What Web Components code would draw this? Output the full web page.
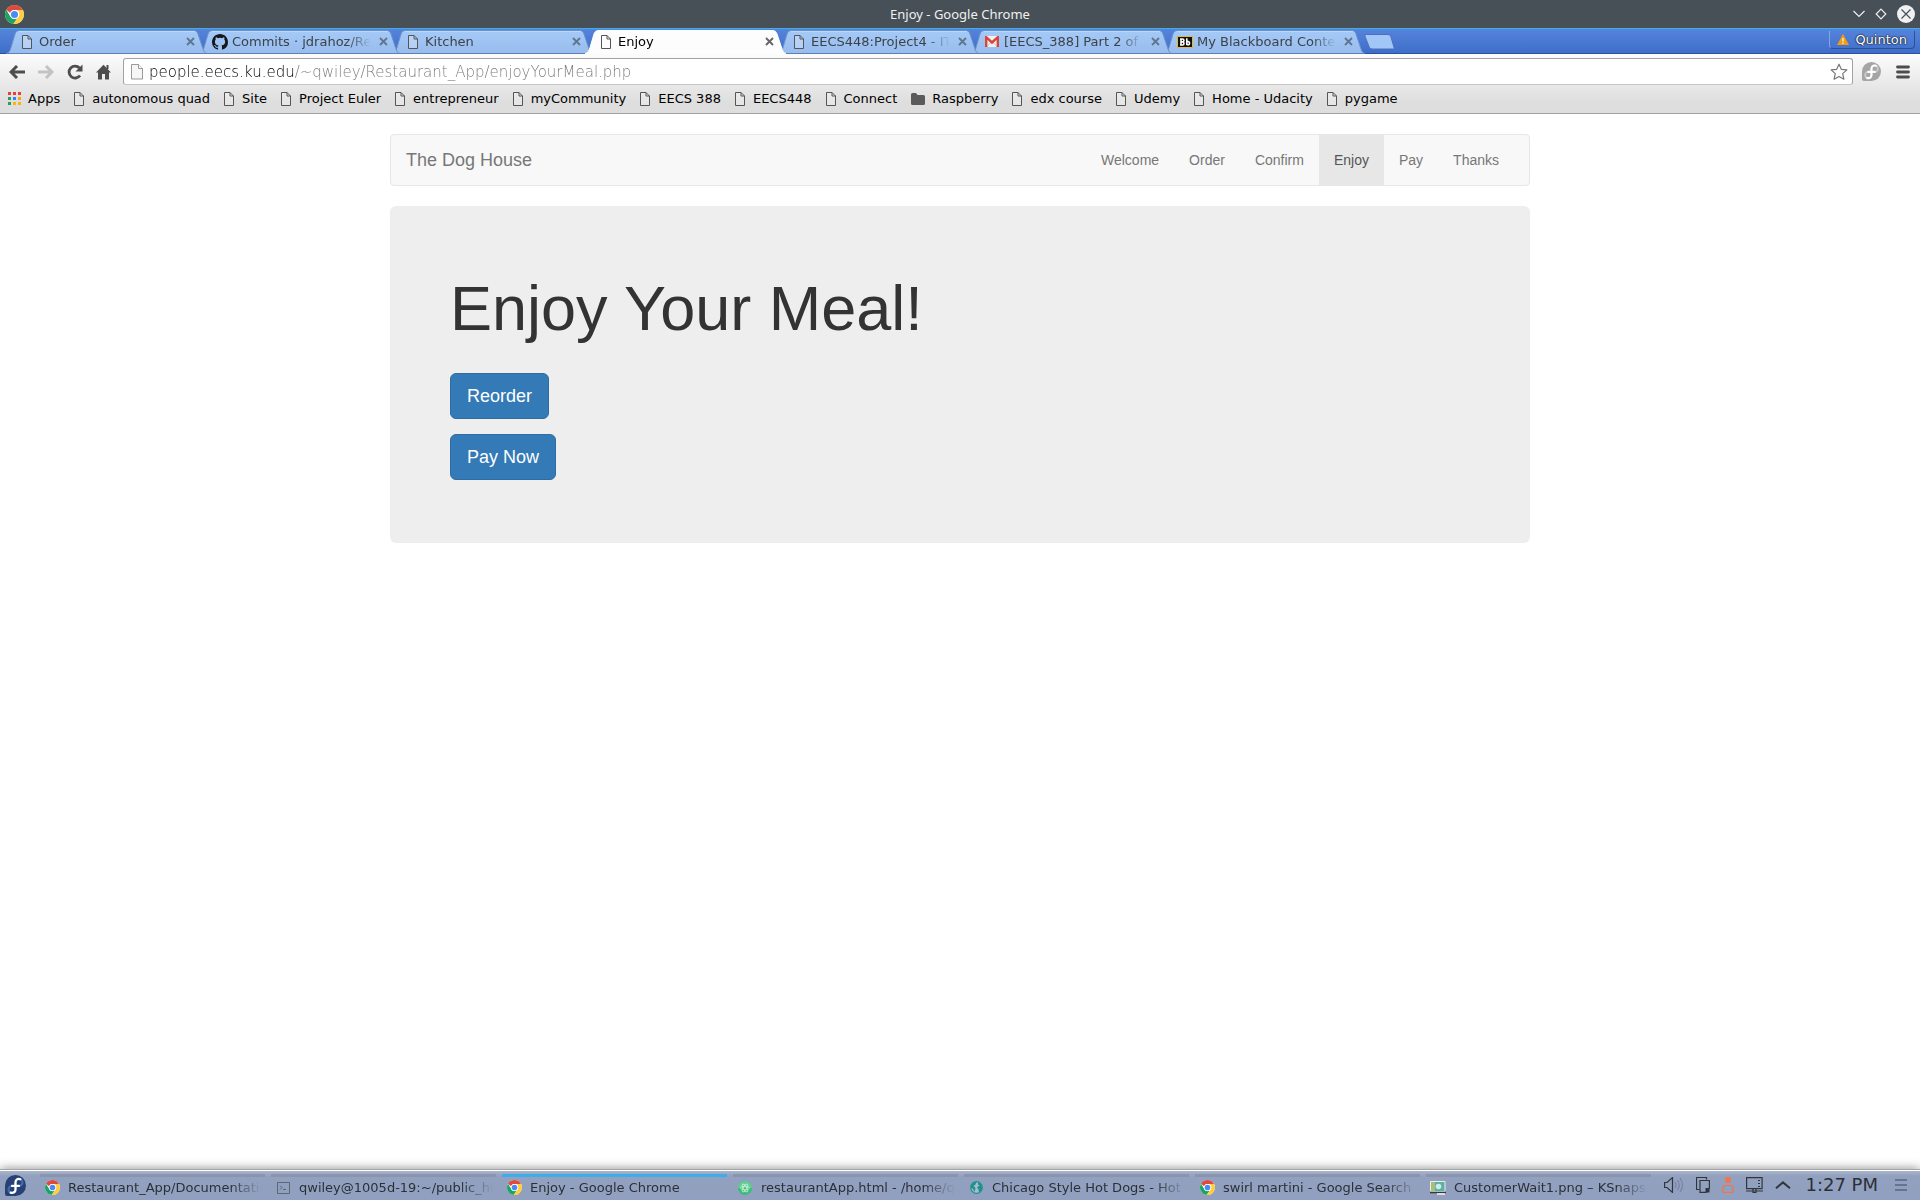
<!DOCTYPE html>
<html lang="en">
<head>
<meta charset="utf-8">
<title>Enjoy - Google Chrome</title>
<style>
html, body { margin: 0; height: 100%; }
body { font-family: "DejaVu Sans", sans-serif; font-size: 13px; overflow: hidden; }
</style>
</head>
<body>
<desk-top>
  <browser-window>
    <dog-house-page></dog-house-page>
  </browser-window>
  <task-bar></task-bar>
</desk-top>

<script>
const CHROME = '<circle cx="12" cy="12" r="12" fill="#fff"/><path d="M1.6 6A12 12 0 0 1 22.4 6.2H12A5.8 5.8 0 0 0 6.6 10z" fill="#dd4b3e"/><path d="M1.6 6A12 12 0 0 0 10.6 23.9L16 16.2A5.8 5.8 0 0 1 6.9 14.8z" fill="#1da362"/><path d="M22.4 6.2A12 12 0 0 1 10.6 23.9L17.1 14.8A5.8 5.8 0 0 0 14.6 6.2z" fill="#ffcd40"/><circle cx="12" cy="12" r="5.6" fill="#fff"/><circle cx="12" cy="12" r="4.5" fill="#4a8af4"/>';
const FEDORA = c => `<path d="M12 0a12 12 0 1 1 0 24H2.400Q0 24 0 21.600V12A12 12 0 0 1 12 0z" fill="${c[0]}"/><path d="M11 12.500H8a4 4 0 1 0 4 4V8.500" fill="none" stroke="${c[1]}" stroke-width="2.400"/><path d="M13 12.500h2.500A4 4 0 1 0 12 8" fill="none" stroke="${c[1]}" stroke-width="2.400"/><path d="M17.500 4.800C14.500 3.500 12 5.500 12 8.500V16.500c0 3-2.600 4.500-5.500 3.600M8 12.500h8" fill="none" stroke="#fff" stroke-width="2.600" stroke-linecap="round"/>`;
const ICONS = {
  doc: [10, 14, '0 0 10 14', '<path d="M.5.500H6L9.500 4V13.500H.5z" fill="#fff" fill-opacity=".25" stroke="#555"/><path d="M6 .5V4H9.500" fill="none" stroke="#555"/>'],
  page: [12, 16, '0 0 12 16', '<path d="M.5.500H7.500L11.500 4.500V15H.5z" fill="#f6f6f6" stroke="#999"/><path d="M7.500.5V4.500H11.500" fill="#fff" stroke="#999"/>'],
  chromeBig: [19, 19, '0 0 24 24', CHROME],
  chrome: [15, 15, '0 0 24 24', CHROME],
  github: [16, 16, '0 0 16 16', '<path fill="#16181b" d="M8 0C3.580 0 0 3.580 0 8c0 3.540 2.290 6.530 5.470 7.590.4.07.55-.17.55-.38 0-.19-.01-.82-.01-1.490-2.010.37-2.530-.49-2.690-.94-.09-.23-.48-.94-.82-1.130-.28-.15-.68-.52-.01-.53.63-.01 1.080.58 1.230.82.72 1.210 1.870.87 2.330.66.07-.52.28-.87.51-1.070-1.780-.2-3.640-.89-3.640-3.950 0-.87.31-1.590.82-2.150-.08-.2-.36-1.020.08-2.120 0 0 .67-.21 2.200.82a7.400 7.400 0 0 1 4 0c1.530-1.040 2.200-.82 2.200-.82.44 1.100.16 1.920.08 2.120.51.56.82 1.270.82 2.150 0 3.070-1.870 3.750-3.650 3.950.29.25.54.73.54 1.480 0 1.070-.01 1.930-.01 2.200 0 .21.15.46.55.38A8 8 0 0 0 16 8c0-4.420-3.580-8-8-8z"/>'],
  gmail: [14, 11, '0 0 14 11', '<path d="M0 0h14v11H0z" fill="#f1efef"/><path d="M2 11L6 6M12 11L8 6" stroke="#ccc"/><path d="M1.200 11V1.200L7 6.500l5.800-5.300V11" fill="none" stroke="#d9453a" stroke-width="2.400"/>'],
  bb: [16, 12, '0 0 16 12', '<path d="M.5.500h15v11H.5z" fill="#111" stroke="#e7b72c"/><g fill="none" stroke="#fff" stroke-width="1.600"><path d="M4 2.800V9.200M3 3h2.500a1.400 1.400 0 0 1 0 2.900H4M5.500 6a1.500 1.500 0 0 1 0 3H3"/><path d="M9.800 2.200V9M9 3h1M10 5.800c3-1.200 3.400 3 .8 3H9.800"/></g>'],
  close: [9, 9, '0 0 9 9', '<path d="M1 1l7 7M8 1L1 8" stroke="currentColor" stroke-width="1.900"/>'],
  back: [16, 14, '0 0 16 14', '<path d="M8 1L2 7l6 6M2.500 7H16" fill="none" stroke="currentColor" stroke-width="3"/>'],
  forward: [16, 14, '0 0 16 14', '<path d="M8 1l6 6-6 6M13.500 7H0" fill="none" stroke="currentColor" stroke-width="3"/>'],
  reload: [16, 16, '0 0 16 16', '<path d="M13 11.500A6 6 0 1 1 12.500 4" fill="none" stroke="currentColor" stroke-width="2.800"/><path d="M15.500.5V7.500H8.500z" fill="currentColor"/>'],
  home: [15, 16, '0 0 15 16', '<path d="M7.500.8L15 8.500h-2V15.500H9V10H6v5.500H2V8.500H0z" fill="currentColor"/><path d="M10.500 1h2v4h-2z" fill="currentColor"/>'],
  star: [18, 18, '0 0 18 18', '<path d="M9 1.200l2.300 5.100 5.600.6-4.200 3.700 1.200 5.600L9 13.400l-4.900 2.800 1.200-5.600L1.100 6.900l5.600-.6z" fill="#fff" stroke="#777" stroke-width="1.200" stroke-linejoin="round"/>'],
  menu: [14, 14, '0 0 14 14', '<path d="M1.500 2h11M1.500 7h11M1.500 12h11" stroke="#4d4d4d" stroke-width="2.800" stroke-linecap="round"/>'],
  fedoraGrey: [19, 19, '0 0 24 24', FEDORA(['#a5a5a5', '#c9c9c9'])],
  fedora: [21, 21, '0 0 24 24', FEDORA(['#294172', '#3c6eb4'])],
  apps: [13, 13, '0 0 13 13', '<path d="M0 0h3v3H0zM5 0h3v3H5zM10 0h3v3h-3z" fill="#e93e30"/><path d="M0 5h3v3H0z" fill="#25a05b"/><path d="M5 5h3v3H5z" fill="#2f85f5"/><path d="M10 5h3v3h-3z" fill="#f7a315"/><path d="M0 10h3v3H0z" fill="#25a05b"/><path d="M5 10h3v3H5zM10 10h3v3h-3z" fill="#fbb40b"/>'],
  folder: [14, 12, '0 0 14 12', '<path d="M0 1.500Q0 0 1.500 0H5l1.500 2H12.500Q14 2 14 3.500V10.500Q14 12 12.500 12H1.500Q0 12 0 10.500z" fill="#5a5a5a"/>'],
  warn: [12, 11, '0 0 12 11', '<path d="M6 0l6 11H0z" fill="#f39c12"/><path d="M6 4v3.500M6 8.500v1.200" stroke="#fff" stroke-width="1.200"/>'],
  min: [12, 8, '0 0 12 8', '<path d="M.5 1L6 6.500 11.500 1" fill="none" stroke="#eee" stroke-width="1.200"/>'],
  max: [12, 12, '0 0 12 12', '<path d="M6 1.200L10.800 6 6 10.800 1.200 6z" fill="none" stroke="#eee" stroke-width="1.200"/>'],
  quit: [18, 18, '0 0 18 18', '<circle cx="9" cy="9" r="9" fill="#f0f1f2"/><path d="M4.500 4.500l9 9M13.500 4.500l-9 9" stroke="#475057" stroke-width="1.200"/>'],
  term: [13, 12, '0 0 13 12', '<path d="M.5.500h12v11H.5z" fill="none" stroke="#5d6676"/><path d="M3 3.500L5 5.500 3 7.500M6 7.500h3" fill="none" stroke="#5d6676"/>'],
  atom: [14, 14, '0 0 14 14', '<circle cx="7" cy="7" r="7" fill="#3dbb79"/><path d="M0 7a7 7 0 0 1 14 0z" fill="#63cd92"/><g fill="none" stroke="#c5f0d6" stroke-width=".8"><ellipse cx="7" cy="7" rx="4.500" ry="1.800"/><ellipse cx="7" cy="7" rx="4.500" ry="1.800" transform="rotate(60 7 7)"/><ellipse cx="7" cy="7" rx="4.500" ry="1.800" transform="rotate(120 7 7)"/></g>'],
  globe: [13, 13, '0 0 13 13', '<circle cx="6.500" cy="6.500" r="5.800" fill="#a3bed2" stroke="#1f9186" stroke-width="1.200"/><path d="M1 4.500L4 1L6.500 1.500 5.500 3.500 3.500 5 5.500 7 5 9.500 4 11 3.500 8.500 1 6.500z" fill="#1f9186"/><path d="M8 1.200L11 3l1.300 3.500-1 3L9 11.500 8.500 8.500 7 6.500 8.500 5H10L8 3.500z" fill="#1f9186"/>'],
  snap: [16, 14, '0 0 16 14', '<path d="M.5.500h14.500v10H.5z" fill="#5fb0a2" stroke="#eceee6"/><path d="M1 1h4v9H1z" fill="#a8bf75"/><circle cx="8.500" cy="5.500" r="2.800" fill="#c9ecf4"/><path d="M0 11.500h16" stroke="#333b40" stroke-width="1.600"/><path d="M7 12.200h8v1.600H7z" fill="#eee"/>'],
  volume: [20, 16, '0 0 20 16', '<path d="M.6 5.500V10.500H3L8.500 15.400V.6L3 5.500z" fill="none" stroke="#31363b" stroke-width="1.200"/><path d="M11 5q2 3 0 6M13.500 3q3.500 5 0 10M16 1q5 7 0 14" fill="none" stroke="#7484a0" stroke-width="1.200"/>'],
  clip: [14, 16, '0 0 14 16', '<path d="M3.500 12.500H.5V.5h10v2" fill="none" stroke="#31363b" stroke-width="1.200"/><path d="M4 3.500h9.400V11L10 15.400H4z" fill="none" stroke="#31363b" stroke-width="1.200"/><path d="M13.500 11V15.500H9.500V11z" fill="#31363b"/>'],
  user: [12, 16, '0 0 12 16', '<circle cx="6" cy="3" r="3" fill="#f67348"/><path d="M1 15.300V10L2.500 8.500H9.500L11 10v5.300z" fill="none" stroke="#f67348" stroke-width="1.200"/>'],
  screen: [17, 16, '0 0 17 16', '<path d="M.6.600h15.500v11H.6zM0 14h17M7 12v3.500h3V12" fill="none" stroke="#31363b" stroke-width="1.200"/><path d="M13 3v7" stroke="#31363b" stroke-width="2" stroke-dasharray="1 2"/>'],
  up: [16, 8, '0 0 16 8', '<path d="M1 7.200L8 1.400 15 7.200" fill="none" stroke="#31363b" stroke-width="2"/>'],
  lines: [12, 12, '0 0 12 12', '<path d="M0 1h12M0 6h12M0 11h12" stroke="#66748e" stroke-width="1.800"/>'],
};

function define(name, render) {
  customElements.define(name, class extends HTMLElement {
    connectedCallback() {
      if (this.shadowRoot) return;
      this.attachShadow({ mode: 'open' }).innerHTML = `<style>
        *{box-sizing:border-box} :host{box-sizing:border-box}
        button{font:inherit;color:inherit;background:none;border:0;padding:0;margin:0}
        a{color:inherit;text-decoration:none}
      </style>` + render(this);
    }
  });
}
const ic = name => `<ui-icon name="${name}"></ui-icon>`;

define('ui-icon', el => {
  const [w, h, box, body] = ICONS[el.getAttribute('name')];
  return `<style>:host{display:block;flex:none}svg{display:block}</style><svg width="${w}" height="${h}" viewBox="${box}" aria-hidden="true">${body}</svg>`;
});

define('desk-top', () => `<style>
  :host{display:flex;flex-direction:column;height:100vh;background:#fff}
</style><slot></slot>`);

define('title-bar', () => `<style>
  :host{display:grid;grid-template-columns:1fr auto 1fr;align-items:center;height:29px;padding:0 5px;background:#475057;
    border-bottom:1px solid #3daee9;color:#eff0f1;font:13px "Noto Sans",sans-serif}
  .ctl{display:flex;gap:10px;justify-content:flex-end;align-items:center}
</style>
${ic('chromeBig')}<span>Enjoy - Google Chrome</span>
<div class="ctl"><button aria-label="Minimize">${ic('min')}</button><button aria-label="Maximize">${ic('max')}</button><button aria-label="Close">${ic('quit')}</button></div>`);

define('browser-tab', el => {
  const on = el.hasAttribute('active');
  const edge = 'M0 24.500C3 24 4 22 5 18.500L9 5C10 2.500 11 1.500 14 1.500H187C190 1.500 191 2.500 192 5L197 20C198 23 199 24 201 24.500';
  return `<style>
  :host{display:grid;grid-template-columns:minmax(0,1fr);flex:none;position:relative;width:201px;height:25px;margin-right:-8px;color:${on ? '#000' : '#3d4248'}}
  svg,.row{grid-area:1/1}
  svg{display:block}
  .row{display:flex;align-items:center;height:25px;padding:0 12px 0 13px;z-index:1}
  .icon{display:flex;flex:none;width:16px;justify-content:center;margin-right:4px}
  .name{flex:1;min-width:0;overflow:hidden;white-space:nowrap;text-align:left;line-height:20px;
    -webkit-mask-image:linear-gradient(to right,#000 calc(100% - 24px),transparent)}
  .x{margin-left:8px;color:${on ? '#666' : '#5f7690'}}
  </style>
  <svg width="201" height="25" viewBox="0 0 201 25" aria-hidden="true">
    <defs><linearGradient id="g" x2="0" y2="1"><stop stop-color="#a6caf7"/><stop offset="1" stop-color="#97bcee"/></linearGradient></defs>
    <path d="${edge}${on ? 'V25H0' : ''}z" fill="${on ? '#fdfdfd' : 'url(#g)'}"/>
    <path d="${edge}" fill="none" stroke="${on ? '#fff' : '#6b92c8'}"/>
    ${on ? '' : '<path d="M13 2.500H189" stroke="#bcd8fb"/><path d="M0 24.500H201" stroke="#5f7fb5"/>'}
  </svg>
  <div class="row"><span class="icon">${ic(el.getAttribute('icon'))}</span><button class="name"><slot></slot></button>
  <button class="x" aria-label="Close tab">${ic('close')}</button></div>`;
});

const TABS = [['doc', 'Order'], ['github', 'Commits · jdrahoz/Restaurant'], ['doc', 'Kitchen'], ['doc', 'Enjoy', 1],
  ['doc', 'EECS448:Project4 - ITTC'], ['gmail', '[EECS_388] Part 2 of Project'], ['bb', 'My Blackboard Content']];
define('tab-strip', () => `<style>
  :host{display:flex;height:25px;padding-left:6px;padding-right:5px;background:linear-gradient(#5684dd,#3f6ec8 24px,#2c50a0 24px)}
  .new{align-self:center;margin-left:7px}
  .new svg{display:block}
  .user{display:flex;align-items:center;gap:6px;height:18px;margin:2px 0 0 auto;padding:0 7px;border:1px solid #83a6e8;border-top:0;
    border-right-color:#2c509c;border-bottom-color:#2c509c;border-radius:0 0 4px 4px;color:#fff;text-shadow:0 0 2px #000,0 0 1px #000}
</style>
${TABS.map(([i, t, on], n) => `<browser-tab icon="${i}" ${on ? 'active' : ''} style="z-index:${on ? 20 : 10 - n}">${t}</browser-tab>`).join('')}
<button class="new" aria-label="New tab"><svg width="31" height="16" viewBox="0 0 31 16"><path d="M2.500.5H24q2 0 2.800 2L30.500 15H8q-2 0-2.800-2L.8 2Q.5.500 2.500.500z" fill="#a2c6f5" stroke="#4a70b8"/></svg></button>
<button class="user">${ic('warn')}Quinton</button>`);

define('tool-bar', () => `<style>
  :host{display:flex;align-items:center;height:31px;padding:4px 10px 0 9px;color:#4d4d4d}
  .nav{display:flex;gap:13px;align-items:center;margin-right:12px}
  .off{color:#c3c3c3}
  .box{flex:1;display:flex;align-items:center;height:27px;padding:0 4px 0 7px;background:#fff;border:1px solid #a2a2a2;border-bottom-color:#c6c6c6;border-radius:3px}
  input{flex:1;min-width:0;height:24px;margin:0 0 0 6px;padding:0;border:0;outline:0;color:#888;font:200 15px "DejaVu Sans Light","DejaVu Sans",sans-serif;
    background:linear-gradient(to right,#000 146px,#777 146px);-webkit-background-clip:text;background-clip:text;-webkit-text-fill-color:transparent}
  .ext{display:flex;align-items:center;gap:15px;margin-left:9px}
</style>
<div class="nav"><button aria-label="Back">${ic('back')}</button><button class="off" aria-label="Forward">${ic('forward')}</button><button aria-label="Reload">${ic('reload')}</button><button aria-label="Home">${ic('home')}</button></div>
<div class="box">${ic('page')}<input aria-label="Address" value="people.eecs.ku.edu/~qwiley/Restaurant_App/enjoyYourMeal.php"><button aria-label="Bookmark">${ic('star')}</button></div>
<div class="ext"><button aria-label="Fedora">${ic('fedoraGrey')}</button><button aria-label="Menu">${ic('menu')}</button></div>`);

const MARKS = ['autonomous quad', 'Site', 'Project Euler', 'entrepreneur', 'myCommunity', 'EECS 388', 'EECS448', 'Connect',
  'Raspberry', 'edx course', 'Udemy', 'Home - Udacity', 'pygame'];
define('bookmarks-bar', () => `<style>
  :host{display:flex;align-items:center;gap:14px;height:29px;padding:0 8px 1px;border-bottom:1px solid #a0a0a0;color:#000}
  a{display:flex;align-items:center;gap:8px;white-space:nowrap;line-height:20px}
  a[aria-haspopup]{gap:7px}
</style>
<a href="#" aria-haspopup="true">${ic('apps')}Apps</a>${MARKS.map(m => m === 'Raspberry' ? `<a href="#" aria-haspopup="true">${ic('folder')}${m}</a>` : `<a href="#">${ic('doc')}${m}</a>`).join('')}`);

define('browser-window', () => `<style>
  :host{display:flex;flex-direction:column;flex:1;min-height:0}
  .bars{background:linear-gradient(#fcfcfc,#dedede 48px)}
  main{flex:1;min-height:0;overflow:hidden;background:#fff}
</style>
<title-bar></title-bar><tab-strip></tab-strip>
<div class="bars"><tool-bar></tool-bar><bookmarks-bar></bookmarks-bar></div>
<main><slot></slot></main>`);

define('site-nav', () => `<style>
  :host{display:flex;justify-content:space-between;min-height:52px;margin-bottom:20px;padding:0 15px;background:#f8f8f8;border:1px solid #e7e7e7;border-radius:4px;color:#777}
  .brand{font-size:18px;line-height:20px;padding:15px 0}
  nav{display:flex;font-size:14px;line-height:20px}
  nav a{padding:15px}
  .on{background:#e7e7e7;color:#555}
</style>
<a class="brand" href="#">The Dog House</a>
<nav>${['Welcome', 'Order', 'Confirm', 'Enjoy', 'Pay', 'Thanks'].map(t => `<a href="#"${t === 'Enjoy' ? ' class="on" aria-current="page"' : ''}>${t}</a>`).join('')}</nav>`);

define('jumbo-panel', () => `<style>
  :host{display:flex;flex-direction:column;align-items:flex-start;gap:15px;padding:68px 60px 63px;background:#eee;border-radius:6px;color:#333}
  h1{margin:0 0 15px;font-size:63px;font-weight:500;line-height:69px}
  button{padding:10px 16px;border:1px solid #2e6da4;border-radius:6px;background:#337ab7;color:#fff;font-size:18px;line-height:24px}
</style>
<h1>Enjoy Your Meal!</h1><button>Reorder</button><button>Pay Now</button>`);

define('dog-house-page', () => `<style>
  :host{display:block;max-width:1140px;margin:0 auto;padding-top:20px;font-family:"Liberation Sans",Arial,sans-serif}
</style><site-nav></site-nav><jumbo-panel></jumbo-panel>`);

define('task-item', el => `<style>
  :host{display:block;flex:0 1 225px;min-width:0}
  button{display:flex;align-items:center;width:100%;height:24px;padding:0 3px 0 4px;border-top:3px solid ${el.hasAttribute('active') ? '#3daee9' : '#8a94ae'}}
  .icon{display:flex;flex:none;width:16px;justify-content:center;margin-right:8px}
  .name{flex:1;min-width:0;overflow:hidden;white-space:nowrap;text-align:left;line-height:20px;
    -webkit-mask-image:linear-gradient(to right,#000 calc(100% - 32px),transparent)}
</style><button><span class="icon">${ic(el.getAttribute('icon'))}</span><span class="name"><slot></slot></span></button>`);

const TASKS = [['chrome', 'Restaurant_App/Documentation'], ['term', 'qwiley@1005d-19:~/public_html'], ['chrome', 'Enjoy - Google Chrome', 1],
  ['atom', 'restaurantApp.html - /home/qwiley'], ['globe', 'Chicago Style Hot Dogs - Hot Dog'], ['chrome', 'swirl martini - Google Search - G'], ['snap', 'CustomerWait1.png – KSnapshot']];
define('task-bar', () => `<style>
  :host{display:flex;flex:none;position:relative;height:30px;padding:0 13px 0 5px;border-top:1px solid #fff;color:#2b3036;
    background:linear-gradient(#a9b5ca,#93a1c0 5px,#919fc0);box-shadow:0 -1px 0 #a5a5a5,0 -2px 9px rgba(0,0,0,.4)}
  .start{align-self:center;margin-right:14px}
  .tasks{display:flex;flex:1;min-width:0;gap:6px;padding-top:3px}
  .tray{display:flex;align-items:center;gap:12px;padding-bottom:2px}
  time{font-size:18px;line-height:22px;margin-left:2px;white-space:nowrap}
  .opt{margin-left:5px}
</style>
<button class="start" aria-label="Launcher">${ic('fedora')}</button>
<div class="tasks">${TASKS.map(([i, t, on]) => `<task-item icon="${i}" ${on ? 'active' : ''}>${t}</task-item>`).join('')}</div>
<div class="tray">${['volume', 'clip', 'user', 'screen', 'up'].map(i => `<button aria-label="${i}">${ic(i)}</button>`).join('')}<time>1:27 PM</time><button class="opt" aria-label="Panel options">${ic('lines')}</button></div>`);
</script>
</body>
</html>
